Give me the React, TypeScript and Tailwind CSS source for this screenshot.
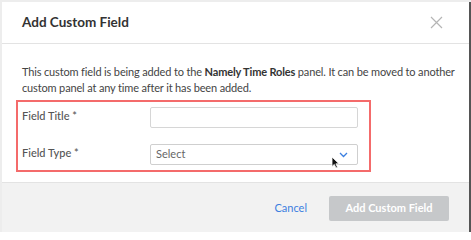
import React from 'react';

const font = { fontFamily: 'Lato, "Open Sans", Arial, sans-serif' };

const App: React.FC = () => {
  return (
    <div className="flex w-[471px] h-[232px] overflow-hidden bg-[#ededed] pt-[2px] pl-[2px]" style={font}>
      <div className="flex flex-col w-[467px] bg-white">
        {/* Header */}
        <div className="flex items-center justify-between h-[42px] shrink-0 border-b border-[#e3e3e3] pl-[20px] pr-[26px]">
          <h2 className="text-[13.5px] font-bold text-[#333]">Add Custom Field</h2>
          <svg width="13" height="13" viewBox="0 0 13 13" className="text-[#b5b5b5]">
            <path d="M1 1L12 12M12 1L1 12" stroke="currentColor" strokeWidth="1.2" fill="none" />
          </svg>
        </div>

        {/* Body */}
        <div className="flex flex-col pl-[20px] pr-[14px] pt-[20px] h-[139px] shrink-0 border-b border-[#e3e3e3]">
          <p className="text-[11px] leading-[16px] tracking-[-0.15px] text-[#444]">
            This custom field is being added to the <span className="font-bold text-[#333]">Namely Time Roles</span> panel. It can be moved to another custom panel at any time after it has been added.
          </p>
          <div className="relative mt-[4px] -ml-[6px] w-[355px] h-[72px] border-2 border-[#f46b6b] pl-[4px] pr-[11px] pt-[5px] flex flex-col gap-[16px]">
            <div className="flex items-start">
              <label className="w-[128px] pt-[1px] text-[11px] font-medium text-[#555]">Field Title *</label>
              <div className="flex-1 h-[21px] rounded-[2px] border border-[#d6d6d6] bg-white" />
            </div>
            <div className="flex items-start">
              <label className="w-[128px] pt-[1px] text-[11px] font-medium text-[#555]">Field Type *</label>
              <div className="flex-1 h-[21px] rounded-[2px] border border-[#cfcfcf] bg-white flex items-center justify-between pl-[5px] pr-[9px]">
                <span className="text-[11px] text-[#666]">Select</span>
                <svg width="9" height="6" viewBox="0 0 9 6">
                  <path d="M1 1L4.5 4.5L8 1" stroke="#3b7fe0" strokeWidth="1.3" fill="none" />
                </svg>
              </div>
            </div>
            <svg className="absolute left-[313px] top-[54px]" width="9" height="13" viewBox="0 0 9 13">
              <path d="M1 1L1 10.5L3.3 8.4L5 12L6.5 11.3L4.9 7.8L8 7.8Z" fill="#111" stroke="#fff" strokeWidth="0.8" />
            </svg>
          </div>
        </div>

        {/* Footer */}
        <div className="flex-1 bg-[#f2f2f2] flex items-start justify-end pt-[13px] pr-[20px] gap-[22px]">
          <button className="h-[25px] text-[11px] text-[#3d7ee0]">Cancel</button>
          <button className="h-[25px] w-[120px] rounded-[2px] bg-[#c6c8ca] text-[11px] font-bold text-white">Add Custom Field</button>
        </div>
      </div>
      <div className="w-[2px] h-full bg-[#555]" />
    </div>
  );
};

export default App;
